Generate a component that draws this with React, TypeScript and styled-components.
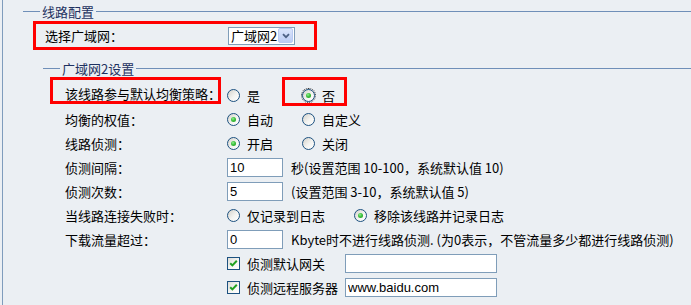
import React from "react";
import styled, { createGlobalStyle } from "styled-components";

const GlobalStyle = createGlobalStyle`
  html, body {
    margin: 0;
    padding: 0;
    background: #ebeff3;
  }
  body {
    font-family: "Noto Sans CJK SC", "Liberation Sans", sans-serif;
    font-size: 13px;
    line-height: 15px;
    color: #000;
  }
`;

const Frame = styled.div`
  margin-left: 2px;
  border-left: 1px solid #7f9cbc;
  min-height: 305px;
  box-sizing: border-box;
  padding: 4px 0 0 20px;
  overflow: hidden;
`;

const Section = styled.div<{ $indent?: number; $top?: number }>`
  margin-left: ${({ $indent }) => $indent ?? 0}px;
  margin-top: ${({ $top }) => $top ?? 0}px;
`;

const SectionHead = styled.div`
  display: flex;
  align-items: center;
  height: 15px;

  &::before,
  &::after {
    content: "";
    height: 1px;
    background: #6f8fb8;
  }
  &::before {
    width: 17px;
    flex: none;
  }
  &::after {
    flex: 1;
  }
`;

const Legend = styled.span`
  padding: 0 2px;
  color: #1e3160;
  white-space: nowrap;
`;

const SelectMark = styled.div`
  display: flex;
  align-items: center;
  box-sizing: border-box;
  width: 284px;
  height: 29px;
  margin: 2px 0 0 10px;
  padding-left: 9px;
  border: 3px solid #f00;
`;

const SelectLabel = styled.span`
  width: 183px;
  flex: none;
`;

const Select = styled.div`
  display: flex;
  align-items: center;
  box-sizing: border-box;
  width: 67px;
  height: 18px;
  padding: 0 1px 0 2px;
  border: 1px solid #7f9db9;
  background: #fff;
  white-space: nowrap;
`;

const SelectText = styled.span`
  flex: none;
`;

const SelectButton = styled.span`
  display: flex;
  align-items: center;
  justify-content: center;
  flex: none;
  box-sizing: border-box;
  width: 15px;
  height: 15px;
  margin-left: auto;
  border: 1px solid #b9cbf3;
  border-radius: 2px;
  background: linear-gradient(180deg, #dbe5fb 0%, #bccdf5 100%);
`;

const Rows = styled.div`
  margin-top: 7px;
`;

const Row = styled.div`
  display: flex;
  align-items: center;
  height: 24px;
  padding-left: 22px;
  white-space: nowrap;
`;

const Label = styled.span`
  width: 162px;
  flex: none;
`;

const LabelMark = styled.div`
  flex: none;
  box-sizing: border-box;
  width: 171px;
  height: 27px;
  margin: 0 6px 9px -15px;
  padding: 6px 0 0 12px;
  border: 3px solid #f00;
`;

const ChoiceMark = styled.div`
  display: flex;
  align-items: center;
  flex: none;
  box-sizing: border-box;
  width: 65px;
  height: 29px;
  margin-bottom: 7px;
  padding: 7px 0 0 17px;
  border: 3px solid #f00;
`;

const Option = styled.span<{ $gap?: number }>`
  display: inline-flex;
  align-items: center;
  gap: 7px;
  margin-right: ${({ $gap }) => $gap ?? 29}px;
`;

const CheckOption = styled.span`
  display: inline-flex;
  align-items: center;
  gap: 7px;
  width: 118px;
  flex: none;
`;

const Radio = styled.span<{ $on?: boolean; $focus?: boolean }>`
  position: relative;
  flex: none;
  box-sizing: border-box;
  width: 13px;
  height: 13px;
  border-radius: 50%;
  border: 1px solid #1c5180;
  background: linear-gradient(135deg, #d3d1ca 0%, #f4f4f1 55%, #fff 100%);
  outline: ${({ $focus }) => ($focus ? "1px dotted #333" : "none")};
  outline-offset: 0;

  &::after {
    content: "";
    display: ${({ $on }) => ($on ? "block" : "none")};
    position: absolute;
    left: 3px;
    top: 3px;
    width: 5px;
    height: 5px;
    border-radius: 50%;
    background: radial-gradient(circle at 40% 35%, #8ff08f 0%, #3cbf3c 45%, #1f9a1f 100%);
  }
`;

const CheckBox = styled.span`
  display: flex;
  align-items: center;
  justify-content: center;
  flex: none;
  box-sizing: border-box;
  width: 13px;
  height: 13px;
  border: 1px solid #1c5180;
  background: linear-gradient(135deg, #dcdcd6 0%, #f6f6f3 55%, #fff 100%);
`;

const Input = styled.input<{ $w?: number }>`
  flex: none;
  box-sizing: border-box;
  width: ${({ $w }) => $w ?? 56}px;
  height: 19px;
  margin: 0;
  padding: 0 2px;
  border: 1px solid #7f9db9;
  background: #fff;
  font-family: "Liberation Sans", Arial, sans-serif;
  font-size: 13px;
  color: #000;
  outline: none;
`;

const Hint = styled.span`
  margin-left: 8px;
`;

const Chevron = () => (
  <svg width="8" height="6" viewBox="0 0 8 6">
    <path d="M1 1.2 L4 4.2 L7 1.2" fill="none" stroke="#4d6185" strokeWidth="1.8" />
  </svg>
);

const Tick = () => (
  <svg width="9" height="9" viewBox="0 0 9 9">
    <path d="M1.2 4.2 L3.4 6.4 L7.8 1.8" fill="none" stroke="#21a121" strokeWidth="2" />
  </svg>
);

const Choice: React.FC<{ text: string; on?: boolean; focus?: boolean; gap?: number }> = ({
  text,
  on,
  focus,
  gap,
}) => (
  <Option $gap={gap}>
    <Radio $on={on} $focus={focus} />
    {text}
  </Option>
);

const Check: React.FC<{ text: string }> = ({ text }) => (
  <CheckOption>
    <CheckBox>
      <Tick />
    </CheckBox>
    {text}
  </CheckOption>
);

export default function App() {
  return (
    <>
      <GlobalStyle />
      <Frame>
        <Section>
          <SectionHead>
            <Legend>线路配置</Legend>
          </SectionHead>
          <SelectMark>
            <SelectLabel>选择广域网：</SelectLabel>
            <Select>
              <SelectText>广域网2</SelectText>
              <SelectButton>
                <Chevron />
              </SelectButton>
            </Select>
          </SelectMark>

          <Section $indent={20} $top={11}>
            <SectionHead>
              <Legend>广域网2设置</Legend>
            </SectionHead>
            <Rows>
              <Row>
                <LabelMark>该线路参与默认均衡策略：</LabelMark>
                <Choice text="是" gap={22} />
                <ChoiceMark>
                  <Choice text="否" on focus gap={0} />
                </ChoiceMark>
              </Row>
              <Row>
                <Label>均衡的权值：</Label>
                <Choice text="自动" on />
                <Choice text="自定义" />
              </Row>
              <Row>
                <Label>线路侦测：</Label>
                <Choice text="开启" on />
                <Choice text="关闭" />
              </Row>
              <Row>
                <Label>侦测间隔：</Label>
                <Input value="10" readOnly />
                <Hint>秒(设置范围 10-100，系统默认值 10)</Hint>
              </Row>
              <Row>
                <Label>侦测次数：</Label>
                <Input value="5" readOnly />
                <Hint>(设置范围 3-10，系统默认值 5)</Hint>
              </Row>
              <Row>
                <Label>当线路连接失败时：</Label>
                <Choice text="仅记录到日志" />
                <Choice text="移除该线路并记录日志" on />
              </Row>
              <Row>
                <Label>下载流量超过：</Label>
                <Input value="0" readOnly />
                <Hint>Kbyte时不进行线路侦测. (为0表示，不管流量多少都进行线路侦测)</Hint>
              </Row>
              <Row>
                <Label />
                <Check text="侦测默认网关" />
                <Input $w={152} value="" readOnly />
              </Row>
              <Row>
                <Label />
                <Check text="侦测远程服务器" />
                <Input $w={152} value="www.baidu.com" readOnly />
              </Row>
            </Rows>
          </Section>
        </Section>
      </Frame>
    </>
  );
}
